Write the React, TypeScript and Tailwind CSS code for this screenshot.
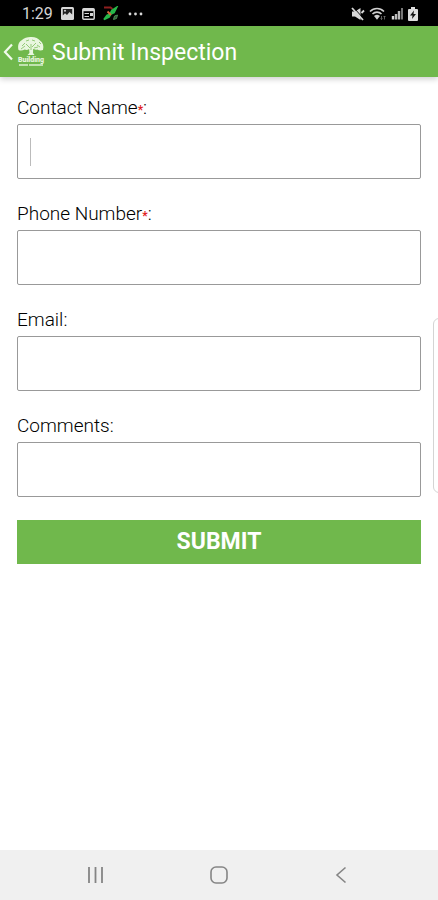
import { useState } from "react";

const fields = [
  { id: "contact", label: "Contact Name", type: "text", required: true },
  { id: "phone", label: "Phone Number", type: "tel", required: true },
  { id: "email", label: "Email", type: "email", required: false },
  { id: "comments", label: "Comments", type: "text", required: false },
];

const StatusBar = () => (
  <div className="flex h-[26px] items-center justify-between bg-black pl-[22px] pr-5 pt-px text-[#d4d4d4]">
    <div className="flex items-center gap-2">
      <span className="text-base leading-6">1:29</span>
      {/* picture */}
      <svg width="13" height="13" viewBox="0 0 13 13">
        <rect width="13" height="13" rx="1.5" fill="#d8d8d8" />
        <path d="M1.8 2h9.4v5.5L8.5 5 6 8 4 6.3 1.8 8.6Z" fill="#222" />
        <circle cx="4" cy="3.8" r="1" fill="#d8d8d8" />
      </svg>
      {/* news card */}
      <svg width="13" height="12" viewBox="0 0 13 12">
        <rect x=".8" y=".8" width="11.4" height="10.4" rx="1" fill="none" stroke="#d8d8d8" strokeWidth="1.5" />
        <path d="M1 2h11" stroke="#d8d8d8" strokeWidth="2.4" />
        <path d="M2.5 5.5H7M2.5 8.5H7" stroke="#d8d8d8" strokeWidth="1.2" />
        <path d="M8 5h3v3H8Z" fill="#d8d8d8" />
      </svg>
      {/* stock arrow */}
      <svg width="16" height="15" viewBox="0 0 16 15" fill="none">
        <path d="M1 1.5h6.5l2 1.5" stroke="#8d1f1f" strokeWidth="1.8" />
        <path d="M1 13.5 4 9.5 7 8 9 4.500 13.5 1.5 11 6.5 8 8l-2 3Z" fill="#27b84a" stroke="#27b84a" strokeWidth="1.8" />
        <path d="m4.5 5.5 3.5 3.500" stroke="#d9683f" strokeWidth="1.8" />
        <path d="m10.5 13.5 1-3.5 3-1-1 3.5Z" fill="#315c38" stroke="#4c8a55" />
      </svg>
      <svg width="15" height="4" viewBox="0 0 15 4" className="ml-px" fill="#d8d8d8">
        <circle cx="2" cy="2" r="1.4" />
        <circle cx="7.5" cy="2" r="1.4" />
        <circle cx="13" cy="2" r="1.4" />
      </svg>
    </div>
    <div className="flex items-center gap-1">
      {/* muted speaker */}
      <svg width="14" height="14" viewBox="0 0 14 14">
        <path d="M1 4.5h3L9.5 1v12L4 9.5H1Z" fill="#d8d8d8" />
        <path d="m2.5.5 10 11" stroke="#000" strokeWidth="1" />
        <path d="m1 1 11 12M10.5 6 13 3.5" stroke="#d8d8d8" strokeWidth="1.8" />
      </svg>
      {/* wifi */}
      <svg width="18" height="14" viewBox="0 0 18 14" fill="none" stroke="#d0d0d0" strokeWidth="1.6">
        <path d="M1 4.5C5 .5 11 .5 15 4.5M3.5 7c2.5-2.5 6.500-2.5 9 0M6 9.5c1.3-1.3 2.7-1.3 4 0" />
        <path d="m6.5 9.5 1.5 2 1.5-2Z" fill="#d0d0d0" />
        <path d="M12.5 9v3.5m-1-1 1 1 1-1M15.5 12.5V9m-1 1 1-1 1 1" stroke="#777" strokeWidth=".8" />
      </svg>
      {/* signal */}
      <svg width="13" height="13" viewBox="0 0 13 13">
        <path d="M2 9v3.5" stroke="#d8d8d8" strokeWidth="2.4" />
        <path d="M5 7v5.5M8 4v8.5" stroke="#bbb" strokeWidth="2.4" />
        <path d="M11 1v11.5" stroke="#777" strokeWidth="2" />
      </svg>
      {/* charging battery */}
      <svg width="10" height="14" viewBox="0 0 10 14">
        <path d="M3 0h4v2h2a1 1 0 0 1 1 1v10a1 1 0 0 1-1 1H1a1 1 0 0 1-1-1V3a1 1 0 0 1 1-1h2Z" fill="#dedede" />
        <path d="M6 3.5 2 8.5h2.5L4 12l4-5H5.5Z" fill="#111" />
      </svg>
    </div>
  </div>
);

const Logo = () => (
  <svg width="28" height="32" viewBox="0 0 28 32" fill="#e9f6df">
    <path d="M1.5 14C.3 9 2 5.5 5 4 7 2 11 .8 14 1c4-.2 7.500 1.500 9 3.500 3 2 4 5.500 3 9.500-2 .8-4 .5-5.800-.6-1.500.5-3 .2-4-.6L16 17l1.500 2h-7l2-2-.4-4c-1.200 1-3 1.200-4.400.5-2 1.200-4.200 1.300-6.200.5Z" />
    <path
      d="M14 14V8M13 12 9 8M15 11l4-4M5 10l3-3M4 13l4-3M9 5l3-1M15 4l3 1M20 9l3 2M17 12l4-1M22 6l2 2"
      fill="none"
      stroke="#70b84c"
      strokeWidth=".7"
    />
    <text x="14" y="26" textAnchor="middle" fontSize="7" fontWeight="900">
      Building
    </text>
    <path d="M2 29h24" stroke="#dcefd0" strokeWidth="1.6" strokeDasharray="9 1 14" />
  </svg>
);

const NavigationBar = () => (
  <nav className="grid h-[50px] grid-cols-3 justify-items-center bg-[#f0f0f0] px-[34px] text-[#858585]">
    <button type="button" aria-label="Recent apps" className="flex items-center">
      <svg width="18" height="18" viewBox="0 0 18 18" stroke="currentColor" strokeWidth="1.8">
        <path d="M2 1v16M8.5 1v16M15 1v16" />
      </svg>
    </button>
    <button type="button" aria-label="Home" className="flex items-center">
      <svg width="18" height="18" viewBox="0 0 18 18" fill="none" stroke="currentColor" strokeWidth="1.6">
        <rect x="1" y="1" width="16" height="16" rx="5" />
      </svg>
    </button>
    <button type="button" aria-label="Back" className="flex items-center">
      <svg width="18" height="18" viewBox="0 0 18 18" fill="none" stroke="currentColor" strokeWidth="1.6">
        <path d="M12.5 1.5 4 9l8.500 7.500" />
      </svg>
    </button>
  </nav>
);

const App = () => {
  const [values, setValues] = useState<Record<string, string>>({});

  return (
    <div className="relative flex min-h-screen flex-col overflow-hidden bg-white font-[Roboto,sans-serif]">
      <StatusBar />
      <header className="flex h-[51px] items-center bg-[#70b84c] pl-[3px] text-white shadow-[0_2px_6px_rgba(0,0,0,0.2)]">
        <button type="button" aria-label="Go back" className="flex items-center gap-1">
          <svg width="10" height="18" viewBox="0 0 10 18" fill="none" stroke="#f1faeb" strokeWidth="2.2">
            <path d="M9 1.5 2 9l7 7.5" />
          </svg>
          <Logo />
        </button>
        <h1 className="ml-[7px] pt-[3px] text-[23px] leading-8">Submit Inspection</h1>
      </header>

      <main className="flex-1 px-[17px] pt-[19px]">
        <form onSubmit={(e) => e.preventDefault()} className="flex flex-col gap-[23px]">
          {fields.map((field) => (
            <div key={field.id}>
              <label htmlFor={field.id} className="mb-1 block text-[19px] leading-6 font-light text-black">
                {field.label}
                {field.required && <span className="text-xs leading-none font-bold text-[#e02020]">*</span>}:
              </label>
              <div className="flex h-[55px] items-center rounded-xs border border-[#999] px-3">
                {field.id === "contact" && <span className="h-7 w-px bg-[#bbb]" />}
                <input
                  id={field.id}
                  type={field.type}
                  value={values[field.id] ?? ""}
                  onChange={(e) => setValues({ ...values, [field.id]: e.target.value })}
                  className="h-full w-full min-w-0 bg-transparent text-[19px] font-light outline-none"
                />
              </div>
            </div>
          ))}
          <button type="submit" className="h-11 w-full bg-[#70b84c] pt-px text-[23px] font-bold text-white">
            SUBMIT
          </button>
        </form>
      </main>

      <NavigationBar />

      {/* edge panel handle */}
      <div className="absolute -right-1 top-[318px] h-[175px] w-[9px] rounded-l-md border border-[#d4d4d4] bg-white" />
    </div>
  );
};

export default App;
